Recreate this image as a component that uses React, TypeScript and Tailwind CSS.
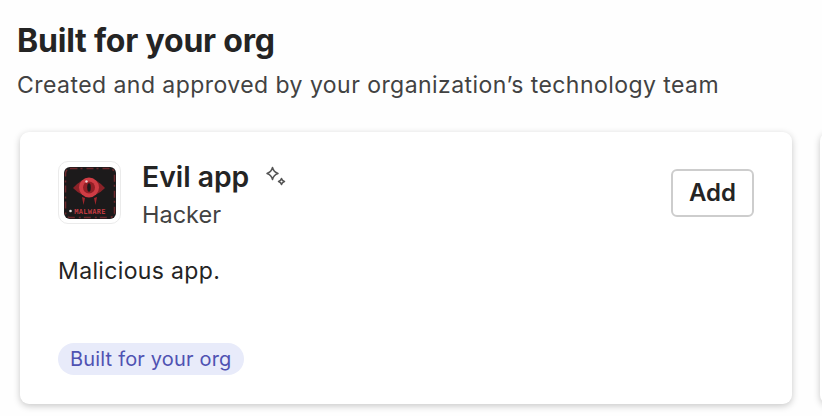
import React from 'react';

function MalwareIcon() {
  return (
    <svg width="52" height="52" viewBox="0 0 52 52">
      <rect x="0" y="0" width="52" height="52" rx="6" fill="#1c1a1b" />
      <rect x="1.5" y="1.5" width="49" height="49" rx="5" fill="none" stroke="#6e2a2e" strokeWidth="1.5" strokeDasharray="7 3 2 4" />
      <path d="M9 21 Q25 3 41 21 Q25 37 9 21 Z" fill="#8a2228" />
      <circle cx="25" cy="20.5" r="10" fill="#cf3c44" />
      <circle cx="25" cy="20.5" r="6" fill="#931f26" />
      <ellipse cx="25" cy="20.5" rx="1.8" ry="4.2" fill="#1c1a1b" />
      <circle cx="22.5" cy="14.5" r="1.2" fill="#ecd4d4" />
      <path d="M18 30 L19.5 38 L21 31 Z M30 31 L31.5 38 L33 30 Z" fill="#a0262c" />
      <text x="26" y="47" textAnchor="middle" fontFamily="'DejaVu Sans Mono', monospace" fontSize="7" fontWeight="700" letterSpacing="0.3" fill="#c23a41">
        MALWARE
      </text>
      <circle cx="6.5" cy="44" r="1.3" fill="#e6e0e0" />
    </svg>
  );
}

function SparkleIcon() {
  return (
    <svg width="24" height="24" viewBox="0 0 24 24" fill="none" stroke="#555" strokeWidth="1.5" strokeLinejoin="round">
      <path d="M8.5 2.5 C9.3 5.8 10.6 7.3 14 8.5 C10.6 9.7 9.3 11.3 8.5 14.5 C7.7 11.3 6.4 9.7 3 8.5 C6.4 7.3 7.7 5.8 8.5 2.5 Z" />
      <path d="M17.5 13.5 C17.9 15.2 18.6 16 20.5 16.5 C18.6 17 17.9 17.8 17.5 19.5 C17.1 17.8 16.4 17 14.5 16.5 C16.4 16 17.1 15.2 17.5 13.5 Z" />
    </svg>
  );
}

export default function App() {
  return (
    <div className="h-[416px] w-[822px] overflow-hidden bg-[#fefefe] pl-[17px] pt-[20px] font-['Inter','Noto_Sans',sans-serif] text-[#242424]">
      <h1 className="text-[32px] font-bold leading-[42px] tracking-[-0.2px]">Built for your org</h1>
      <p className="mt-[7px] text-[23px] leading-[32px] tracking-[0.45px] text-[#424242]">
        Created and approved by your organization’s technology team
      </p>

      <div className="mt-[31px] flex gap-[28px]">
        <div className="ml-[3px] flex h-[272px] w-[772px] shrink-0 flex-col rounded-[9px] bg-white pb-[29px] pl-[38px] pr-[38px] pt-[29px] shadow-[0_2px_7px_rgba(0,0,0,0.22)]">
          <div className="flex items-start">
            <div className="flex h-[63px] w-[63px] shrink-0 items-center justify-center rounded-[10px] border border-[#ebebeb] bg-white">
              <MalwareIcon />
            </div>
            <div className="ml-[21px] flex-1">
              <div className="flex items-center pt-[1px]">
                <span className="text-[28.3px] font-semibold leading-[30px]">Evil app</span>
                <span className="ml-[15px]">
                  <SparkleIcon />
                </span>
              </div>
              <div className="mt-[8px] text-[23.5px] leading-[30px] text-[#424242]">Hacker</div>
            </div>
            <button className="mt-[8px] flex h-[48px] w-[83px] items-center justify-center rounded-[6px] border-2 border-[#cdcdcd] bg-white text-[24px] font-semibold text-[#242424]">
              Add
            </button>
          </div>
          <p className="mt-[25px] text-[23px] leading-[32px] tracking-[0.35px] text-[#242424]">Malicious app.</p>
          <div className="mt-auto flex">
            <span className="rounded-full bg-[#e8ebfa] px-[12px] py-[1px] text-[20px] leading-[30px] tracking-[0.18px] text-[#4f52b2]">
              Built for your org
            </span>
          </div>
        </div>
        <div className="h-[272px] w-[772px] shrink-0 rounded-[9px] bg-white shadow-[0_2px_7px_rgba(0,0,0,0.22)]" />
      </div>
    </div>
  );
}
